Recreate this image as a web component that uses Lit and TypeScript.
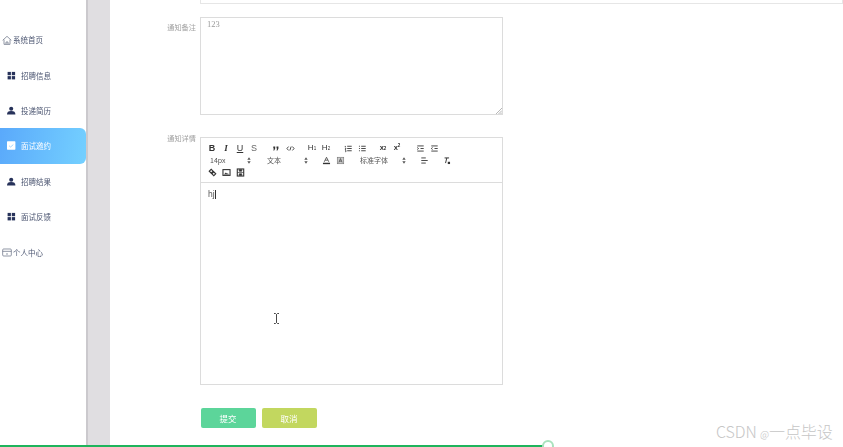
import { LitElement, html, css, svg } from "lit";
import { customElement } from "lit/decorators.js";

const grid = svg`<rect x="1" y="1" width="5.500" height="5.500"/><rect x="8" y="1" width="5.500" height="5.500"/><rect x="1" y="8" width="5.500" height="5.500"/><rect x="8" y="8" width="5.500" height="5.500"/>`;
const person = svg`<circle cx="7" cy="4.200" r="3.400"/><path d="M0 13.500c0-3.500 2-5.500 7-5.500s7 2 7 5.500z"/>`;
const check = svg`<rect x="0" y="0" width="14" height="14" rx="1" fill="#fff"/><path d="M3.500 7.500l2.500 2 4.500-4" stroke="#7cc4ff" stroke-width="1.200" fill="none"/>`;

const nav = [
  { t: "系统首页", top: true, i: svg`<path d="M1 7.500 7.500 1.500 14 7.500M3 6.500V13.500H12V6.500M6 13.500V10H9V13.500" fill="none" stroke="#5b6478" stroke-width="1"/>` },
  { t: "招聘信息", i: grid },
  { t: "投递简历", i: person },
  { t: "面试邀约", active: true, i: check },
  { t: "招聘结果", i: person },
  { t: "面试反馈", i: grid },
  { t: "个人中心", top: true, i: svg`<rect x="1" y="2.500" width="13" height="10.500" rx="1.500" fill="none" stroke="#5b6478"/><path d="M1 6H14" stroke="#5b6478"/><path d="M6 10H9" stroke="#5b6478"/>` },
];

const line = (d: string, w = 1.500) => svg`<path d=${d} fill="none" stroke="#444" stroke-width=${w}/>`;

const tb = {
  b: html`<span class="g b">B</span>`,
  i: html`<span class="g i">I</span>`,
  u: html`<span class="g u">U</span>`,
  s: html`<span class="g s">S</span>`,
  quote: svg`<path d="M2 4h3v3l-1.500 3H2l1-3H2zM7 4h3v3l-1.500 3H7l1-3H7z" fill="#333"/>`,
  code: line("M4 4 1.500 7 4 10M8 4l-2 6M10 4l2.500 3L10 10"),
  h1: html`<span class="g h">H<sub>1</sub></span>`,
  h2: html`<span class="g h">H<sub>2</sub></span>`,
  ol: line("M5 3.500h7M5 7h7M5 10.500h7M2 3v2M2 6.500h1v1H2v1h1M2 10h1v2H2"),
  ul: line("M5 3.500h7M5 7h7M5 10.500h7M1.500 3.500h1.500M1.500 7h1.500M1.500 10.500h1.500"),
  sub: html`<span class="g x">x<sub>2</sub></span>`,
  sup: html`<span class="g x">x<sup>2</sup></span>`,
  ind1: line("M2 3h10M7 7h5M2 11h10M2 5.500l2 1.500-2 1.500"),
  ind2: line("M2 3h10M7 7h5M2 11h10M4 5.500 2 7l2 1.500"),
  color: svg`<path d="M3.500 9 7 2l3.500 7M5 6.500h4" fill="none" stroke="#444" stroke-width="1.300"/><rect x="1.500" y="10.500" width="11" height="2.200" fill="#333"/>`,
  bg: svg`<rect x="2" y="2" width="10" height="10" fill="#ccc" stroke="#777"/><path d="M4.500 10 7 4l2.500 6M5.500 8h3" fill="none" stroke="#333"/>`,
  align: line("M2 3h7M2 7h10M2 11h7"),
  clean: svg`<path d="M4 3h7M7.500 3 5.500 11" fill="none" stroke="#333" stroke-width="1.500"/><rect x="9" y="9" width="3.500" height="3.500" fill="#333"/>`,
  link: svg`<path d="M2 5l3-3 3 3-3 3zM6 9l3-3 3 3-3 3z" fill="none" stroke="#333" stroke-width="1.800"/>`,
  image: svg`<rect x="1.500" y="2.500" width="11" height="9" fill="none" stroke="#333" stroke-width="1.700"/><path d="M3 10l3-3 2 2 1-1 2 2z" fill="#333"/>`,
  video: svg`<rect x="2" y="1.500" width="10" height="11" fill="none" stroke="#333" stroke-width="1.700"/><path d="M2 7h10M5 2v3h4V2M5 12V9h4v3" fill="#333" stroke="#333"/>`,
};

const btn = (c: unknown) => html`<span class="btn">${(c as any)?._$litType$ === 1 ? c : html`<svg viewBox="0 0 14 14" width="9" height="9">${c}</svg>`}</span>`;

const arrows = html`<svg class="arr" viewBox="0 0 6 10" width="4" height="7"><path d="M3 0 5.500 4h-5zM3 10 .5 6h5z" fill="#555"/></svg>`;
const picker = (t: string, wide = false) => html`<span class="picker ${wide ? "wide" : ""}"><span>${t}</span>${arrows}</span>`;

@customElement("app-root")
export class AppRoot extends LitElement {
  static styles = css`
    :host { display: flex; width: 843px; height: 447px; position: relative; overflow: hidden; background: #fff;
      font-family: "Noto Sans CJK SC", "Liberation Sans", sans-serif; }
    .side { width: 86px; flex: none; background: #fff; border-right: 2px solid #cbc9cd; padding-top: 22px; box-sizing: content-box; }
    .item { height: 35.400px; display: flex; align-items: center; gap: 5px; padding-left: 7px; font-size: 7.500px; color: #4a5470; filter: blur(.35px); }
    .item svg { width: 9px; height: 9px; fill: #27325a; flex: none; }
    .item.top { padding-left: 2px; gap: 1px; }
    .item.top svg { width: 10px; height: 10px; }
    .item.active { color: #fff; background: linear-gradient(100deg, #5aa9fb, #74d0ff); border-radius: 0 6px 6px 0; }
    .gutter { width: 22px; flex: none; background: #e0dee1; }
    .main { flex: 1; filter: blur(.35px); }
    .stub { margin-left: 90px; height: 3px; border: 1px solid #e6e6e6; border-top: 0; }
    .row { display: grid; grid-template-columns: 86px 303px; column-gap: 4px; }
    .label { font-size: 7.200px; color: #a3a3a3; text-align: right; line-height: 10px; }
    .r1 { margin-top: 13px; }
    .r1 .label { padding-top: 5px; }
    .r2 { margin-top: 22px; }
    .r2 .label { margin-top: -4px; }
    .ta { height: 98px; box-sizing: border-box; border: 1px solid #dcdcdc; padding: 1px 6px; font: 8.500px/11px "Liberation Serif", "DejaVu Serif", serif; color: #9a9a9a; position: relative; }
    .grip { position: absolute; right: 0; bottom: 0; }
    .editor { border: 1px solid #dcdcdc; height: 248px; box-sizing: border-box; display: flex; flex-direction: column; }
    .toolbar { display: flex; flex-wrap: wrap; padding: 4px; border-bottom: 1px solid #dcdcdc; height: 45px; box-sizing: border-box; align-content: flex-start; }
    .grp { display: flex; margin-right: 8px; height: 12px; }
    .btn { width: 14px; height: 12px; display: flex; align-items: center; justify-content: center; }
    .g { font: 9px/12px "Liberation Sans", sans-serif; color: #333; }
    .b { font-weight: 700; }
    .i { font-style: italic; font-family: "Liberation Serif", serif; font-weight: 700; }
    .u { text-decoration: underline; }
    .s { color: #666; }
    .h { font-size: 8px; }
    .x { font-size: 7.500px; font-weight: 700; margin-left: -2px; }
    sub, sup { font-size: 4.500px; line-height: 0; vertical-align: baseline; }
    sup { vertical-align: 3px; }
    .picker { width: 49px; height: 12px; display: flex; align-items: center; justify-content: space-between; padding: 0 3px 0 5px; box-sizing: border-box; font-size: 7px; color: #555; }
    .picker.wide { width: 54px; }
    .body { padding: 5px 7px; font: 8.500px/12px "Liberation Sans", sans-serif; color: #555; display: flex; align-items: flex-start; }
    .caret { width: 1px; height: 9px; background: #333; margin: 2px 0 0 0; }
    .actions { display: flex; gap: 6px; margin: 23px 0 0 90.500px; }
    .action { width: 55px; height: 20px; border-radius: 2px; color: #fff; font-size: 8.500px; display: flex; align-items: center; justify-content: center; }
    .ok { background: #5cd59a; }
    .no { background: #c2d75f; }
    .beam { position: absolute; left: 273px; top: 313px; }
    .progress { position: absolute; left: 0; bottom: 0; width: 543px; height: 2px; background: #1fb45c; }
    .knob { position: absolute; left: 542px; top: 440px; width: 12px; height: 12px; box-sizing: border-box; border-radius: 50%; background: #fff; border: 2.500px solid #a9e2bd; }
    .wm { position: absolute; left: 716px; top: 420px; font-size: 16px; line-height: 22px; color: #c6c6c6; font-weight: 300; white-space: nowrap; letter-spacing: -.1px; }
    .wm small { font-size: 10px; }
  `;

  render() {
    return html`
      <div class="side">
        ${nav.map((n) => html`<div class="item ${n.top ? "top" : ""} ${n.active ? "active" : ""}"><svg viewBox="0 0 15 14">${n.i}</svg><span>${n.t}</span></div>`)}
      </div>
      <div class="gutter"></div>
      <div class="main">
        <div class="stub"></div>
        <div class="row r1">
          <div class="label">通知备注</div>
          <div class="ta">123<svg class="grip" width="6" height="6" viewBox="0 0 6 6"><path d="M6 0 0 6M6 2.500 2.500 6M6 4.500 4.500 6" stroke="#999" stroke-width=".7"/></svg></div>
        </div>
        <div class="row r2">
          <div class="label">通知详情</div>
          <div class="editor">
            <div class="toolbar">
              <span class="grp">${btn(tb.b)}${btn(tb.i)}${btn(tb.u)}${btn(tb.s)}</span>
              <span class="grp">${btn(tb.quote)}${btn(tb.code)}</span>
              <span class="grp">${btn(tb.h1)}${btn(tb.h2)}</span>
              <span class="grp">${btn(tb.ol)}${btn(tb.ul)}</span>
              <span class="grp">${btn(tb.sub)}${btn(tb.sup)}</span>
              <span class="grp">${btn(tb.ind1)}${btn(tb.ind2)}</span>
              <span class="grp">${picker("14px")}</span>
              <span class="grp">${picker("文本")}</span>
              <span class="grp">${btn(tb.color)}${btn(tb.bg)}</span>
              <span class="grp">${picker("标准字体", true)}</span>
              <span class="grp">${btn(tb.align)}</span>
              <span class="grp">${btn(tb.clean)}</span>
              <span class="grp">${btn(tb.link)}${btn(tb.image)}${btn(tb.video)}</span>
            </div>
            <div class="body"><span>hj</span><span class="caret"></span></div>
          </div>
        </div>
        <div class="actions">
          <div class="action ok">提交</div>
          <div class="action no">取消</div>
        </div>
      </div>
      <svg class="beam" width="7" height="11" viewBox="0 0 7 11"><path d="M1 .5h1.500L3.500 1.500 4.500 .5H6M3.500 1.500v8M1 10.500h1.500l1-1 1 1H6" fill="none" stroke="#333" stroke-width=".9"/></svg>
      <div class="wm">CSDN <small>@</small>一点毕设</div>
      <div class="progress"></div>
      <div class="knob"></div>
    `;
  }
}
